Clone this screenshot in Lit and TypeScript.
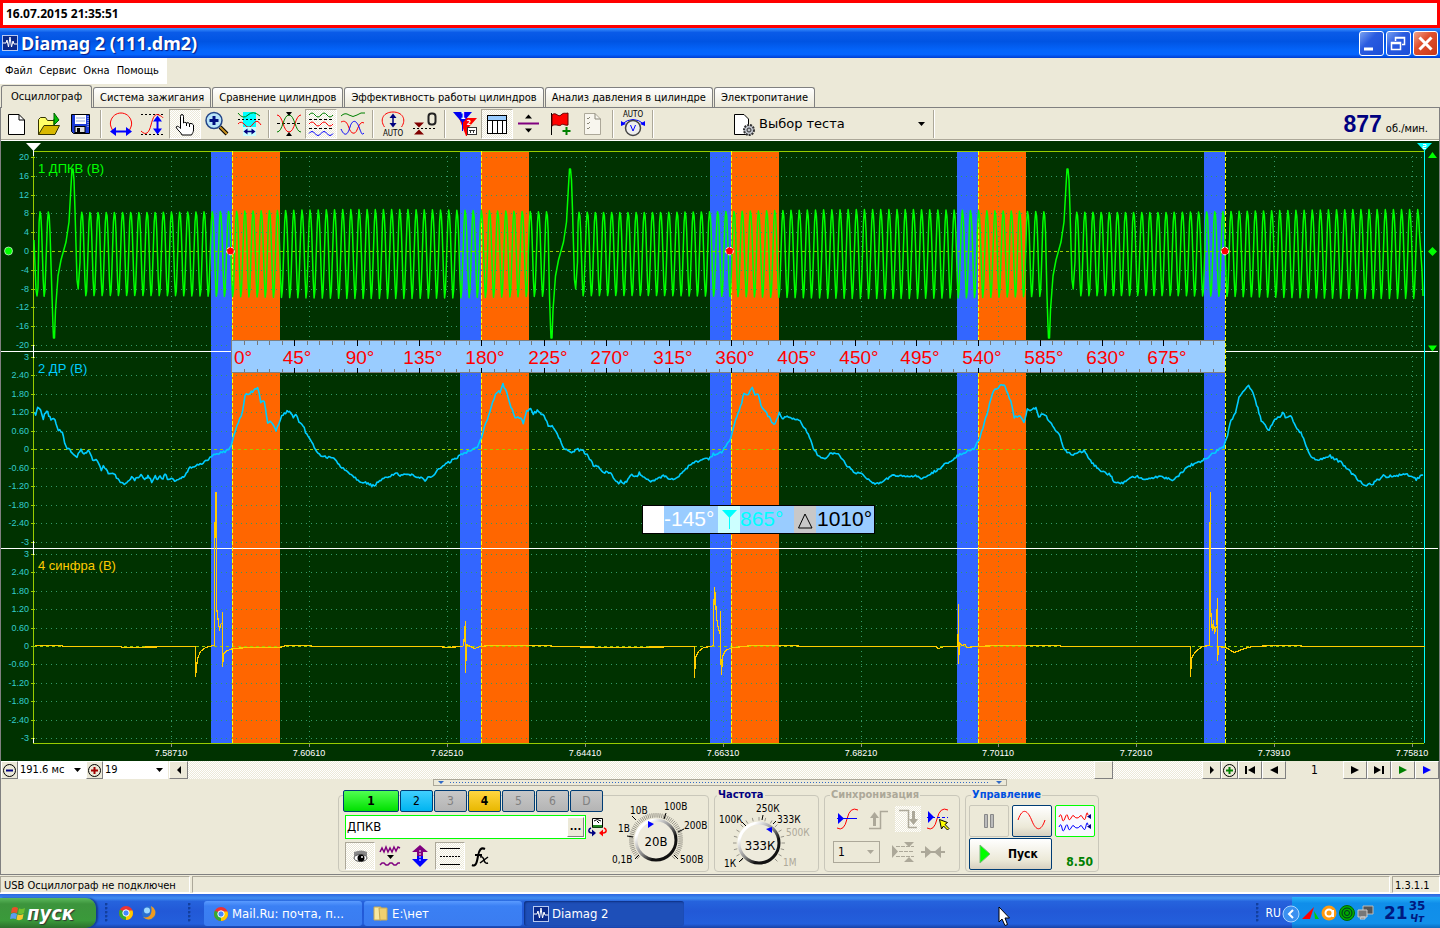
import { LitElement, html, svg, css } from "lit";
import { customElement, state } from "lit/decorators.js";

type Pt = [number, number];

/* ---------- signal data ---------- */

const CURSORS = [232, 481, 731, 978, 1225];
const GRID_X = [171, 309, 447, 585, 723, 861, 998, 1136, 1274, 1412];
const X_LABELS = ["7.58710", "7.60610", "7.62510", "7.64410", "7.66310", "7.68210", "7.70110", "7.72010", "7.73910", "7.75810"];

const SCALES = [
  { zero: 251, step: 18.8, labels: ["20", "16", "12", "8", "4", "0", "-4", "-8", "-12", "-16", "-20"] },
  { zero: 449, step: 18.5, labels: ["3", "2.40", "1.80", "1.20", "0.60", "0", "-0.60", "-1.20", "-1.80", "-2.40", "-3"] },
  { zero: 646, step: 18.4, labels: ["3", "2.40", "1.80", "1.20", "0.60", "0", "-0.60", "-1.20", "-1.80", "-2.40", "-3"] },
];

const scaled = (flat: number[], ox: number, sx: number): Pt[] => {
  const out: Pt[] = [];
  for (let i = 0; i < flat.length; i += 2) out.push([ox + flat[i] / sx, 340 + flat[i + 1] / 3]);
  return out;
};

const PRESSURE: Pt[] = [
  ...scaled([104, 217, 107, 227, 113, 198, 122, 210, 130, 235, 137, 215, 143, 217, 153, 241, 165, 238, 175, 270, 187, 277, 197, 320, 210, 332, 220, 340, 231, 350, 243, 330, 252, 343, 267, 330, 278, 361, 292, 360, 304, 390, 310, 378, 325, 400, 342, 402, 357, 423, 377, 432, 395, 412, 404, 421, 423, 404, 434, 420, 444, 408, 455, 425, 466, 409, 473, 420, 480, 408, 489, 418, 495, 403, 506, 420, 516, 412, 528, 424, 555, 405, 570, 380, 583, 382, 592, 370, 605, 375, 630, 353, 650, 340, 675, 335, 690, 325, 697, 305, 705, 275, 715, 245, 728, 215, 735, 165, 750, 160, 773, 141, 782, 185, 793, 187, 803, 247, 817, 248, 828, 275, 837, 250, 845, 228, 865, 212, 880, 232, 888, 222, 897, 250], 0, 3),
  [303, 426], [308, 437], [313, 444], [318, 454], [325, 457], [335, 459], [342, 468], [350, 473], [358, 480], [373, 486], [385, 478], [396, 473],
  ...scaled([0, 408, 35, 402, 75, 420, 100, 405, 125, 380, 180, 347, 215, 327, 232, 320, 245, 290, 270, 210, 290, 155, 300, 155, 309, 133, 320, 160, 333, 200, 345, 232, 362, 235, 370, 250, 380, 215, 392, 203, 400, 220, 412, 212, 432, 230, 445, 255, 460, 262, 480, 300, 492, 325, 515, 342, 530, 328, 550, 333, 565, 350, 580, 375, 595, 378, 610, 398, 630, 395, 640, 415, 656, 430, 662, 420, 672, 432, 695, 405, 712, 408, 718, 398, 732, 415, 760, 425, 790, 408, 820, 418, 845, 403, 870, 372, 910, 357, 930, 355, 940, 343, 965, 338, 985, 308, 995, 285, 1010, 230, 1025, 190, 1032, 160, 1045, 168, 1050, 150, 1057, 145, 1065, 165, 1075, 165, 1083, 195, 1100, 220, 1115, 245, 1125, 255, 1138, 218, 1147, 235, 1165, 228, 1200, 245, 1225, 280, 1240, 325, 1255, 348, 1275, 360, 1290, 342, 1315, 342, 1340, 375, 1365, 398, 1390, 405, 1425, 435, 1460, 418, 1480, 405, 1495, 410], 400, 3),
  ...scaled([0, 410, 45, 408, 65, 415, 85, 405, 125, 378, 170, 345, 215, 325, 230, 300, 245, 250, 272, 150, 285, 148, 295, 133, 305, 137, 322, 185, 332, 235, 345, 225, 360, 245, 370, 210, 385, 210, 395, 200, 403, 228, 418, 222, 440, 250, 465, 290, 478, 330, 500, 345, 535, 333, 550, 360, 580, 390, 612, 405, 622, 425, 648, 430, 665, 415, 690, 410, 720, 418, 755, 408, 795, 420, 840, 377, 880, 362, 910, 340, 940, 320, 952, 285, 962, 240, 975, 220, 985, 170, 1000, 155, 1013, 137, 1025, 160, 1040, 205, 1050, 245, 1073, 270, 1090, 235, 1105, 230, 1112, 215, 1120, 232, 1135, 225, 1150, 258, 1165, 280, 1180, 315, 1195, 352, 1215, 360, 1250, 348, 1285, 370, 1320, 408, 1350, 438, 1375, 430, 1405, 408, 1440, 410, 1470, 400, 1500, 417, 1520, 405], 900, 2.906),
];

const SPARK: Pt[] = [
  [34, 645], [60, 645], [64, 646], [120, 646], [122, 647], [180, 646], [195, 646], [195, 676], [196, 667], [197, 658], [200, 651], [205, 647], [213, 645], [214, 645], [214, 570],
  [215, 492], [216, 492], [216, 606], [217, 615], [218, 622], [219, 630], [220, 624], [222, 622], [222, 612], [222, 666], [223, 654], [225, 651], [232, 648], [250, 647], [280, 647], [285, 645], [310, 645],
  [312, 646], [440, 646], [445, 647], [463, 646], [464, 634], [465, 621], [465, 672], [466, 644], [470, 646], [474, 648], [480, 646], [490, 645], [550, 645], [552, 646], [620, 647], [693, 646],
  [694, 646], [694, 677], [695, 657], [698, 651], [703, 647], [710, 646], [713, 645], [713, 618], [714, 587], [715, 597], [716, 617], [718, 629], [720, 634], [720, 611], [720, 648], [721, 674],
  [722, 656], [725, 650], [732, 647], [745, 646], [750, 645], [795, 645], [800, 646], [935, 646], [938, 648], [944, 646], [957, 646], [958, 626], [958, 604], [958, 663], [959, 642], [961, 645], [965, 644], [966, 647],
  [975, 646], [1000, 645], [1058, 645], [1062, 646], [1190, 646], [1190, 676], [1191, 658], [1195, 651], [1202, 646], [1209, 645], [1209, 570], [1210, 492], [1210, 605], [1211, 623], [1212, 630],
  [1213, 620], [1214, 633], [1216, 625], [1217, 598], [1217, 660], [1218, 646], [1225, 647], [1234, 652], [1244, 648], [1252, 646], [1275, 645], [1300, 645], [1302, 646], [1424, 646],
];

const toPath = (pts: Pt[]) => pts.map(([x, y]) => `${x.toFixed(1)},${y.toFixed(1)}`).join(" ");

/* deterministic jitter gives the trace its sampled look */
function roughen(pts: Pt[], amp: number): Pt[] {
  const out: Pt[] = [];
  let seed = 7;
  for (let i = 0; i < pts.length - 1; i++) {
    const [x0, y0] = pts[i];
    const [x1, y1] = pts[i + 1];
    const n = Math.max(1, Math.round((x1 - x0) / 1.3));
    for (let k = 0; k < n; k++) {
      seed = (seed * 1103515245 + 12345) % 2147483648;
      const r = (seed / 2147483648 - 0.5) * 2 * amp;
      out.push([x0 + ((x1 - x0) * k) / n, y0 + ((y1 - y0) * k) / n + r]);
    }
  }
  out.push(pts[pts.length - 1]);
  return out;
}

function crank(): Pt[] {
  const out: Pt[] = [[34, 240], [36, 290], [37, 296], [38, 288]];
  const tooth = (p: number, last = false) => {
    const wob = Math.sin(p / 80) * 1.5;
    out.push([p - 1.2, 222], [p - 0.3, 211 + wob], [p + 0.6, 216], [p + 1.4, 232]);
    if (!last) out.push([p + 2.9, 280], [p + 3.8, 297 - wob], [p + 4.6, 291], [p + 5.4, 270]);
  };
  const gap = (d: number) =>
    out.push([d - 2, 296], [d - 1, 326], [d - 0.5, 338], [d + 0.5, 338], [d + 1.5, 310], [d + 4, 276], [d + 7, 260], [d + 12, 242], [d + 15, 222], [d + 17, 186], [d + 18, 169], [d + 19, 169], [d + 20, 180], [d + 21, 210], [d + 23, 280], [d + 24.2, 289], [d + 26, 262]);
  tooth(40.3);
  tooth(48.6, true);
  gap(54);
  for (let k = 0; k < 58; k++) tooth(82 + k * 8.155, k === 57);
  gap(551.5);
  for (let k = 0; k < 58; k++) tooth(579.3 + k * 8.155, k === 57);
  gap(1049);
  for (let k = 0; k < 43; k++) tooth(1077 + k * 8.12, k === 42);
  out.push([1422, 270], [1423, 296]);
  return out;
}

const angleX = (deg: number) => {
  const i = Math.min(3, Math.floor(deg / 180));
  return Math.round(CURSORS[i] + ((CURSORS[i + 1] - CURSORS[i]) * (deg - i * 180)) / 180);
};

@customElement("scope-plot")
export class ScopePlot extends LitElement {
  static styles = css`
    :host { display: block; background: #003200; }
    svg { display: block; width: 100%; height: auto; font-family: "Liberation Sans", Arial, sans-serif; }
    .crisp { shape-rendering: crispEdges; }
    .scale { font-size: 9px; fill: #33cccc; text-anchor: end; }
    .time { font-size: 9px; fill: #fff; text-anchor: middle; }
    .name { font-size: 13px; }
    .deg { font-size: 19px; fill: #f00; text-anchor: middle; }
    .read { font-size: 21px; }
    .dots { stroke: #339966; stroke-dasharray: 1 4; }
    .axis { stroke: #99cc00; fill: none; }
    .trace { fill: none; stroke-linejoin: round; }
  `;

  render() {
    const ticks: number[] = [];
    for (let d = 9; d < 720; d += 9) ticks.push(d);
    const majors = ticks.filter((d) => d % 45 === 0);
    return html`<svg viewBox="1 141 1438 620" role="img" aria-label="Осциллограмма">
      <rect x="0" y="141" width="1440" height="620" fill="#003200" />
      <g class="crisp">
        ${CURSORS.map((x, i) => svg`
          <rect x=${x - 21} y="152" width="21" height="591" fill="#3366ff" />
          ${i < 4 ? svg`<rect x=${x} y="152" width="48" height="591" fill="#ff6600" />` : null}`)}
        ${SCALES.map((s) => s.labels.map((_, i) => {
          const y = Math.round(s.zero + (i - 5) * s.step) + 0.5;
          return i === 5
            ? svg`<line x1="34" x2="1424" y1=${y} y2=${y} class="axis" stroke-dasharray="3 3" />`
            : svg`<line x1="36" x2="1422" y1=${y} y2=${y} class="dots" />`;
        }))}
        ${GRID_X.map((x) => svg`
          <line x1=${x + 0.5} x2=${x + 0.5} y1="156" y2="743" class="dots" />
          <line x1=${x + 0.5} x2=${x + 0.5} y1="743" y2="747" stroke="#8a8a8a" />`)}
        <path class="axis" d="M33.5 151.5H1424 M33.5 151V743.5H1424" />
        ${SCALES.map((s) => s.labels.map((_, i) => {
          const y = Math.round(s.zero + (i - 5) * s.step) + 0.5;
          return svg`<line x1="31" x2="35" y1=${y} y2=${y} class="axis" />`;
        }))}
        <path d="M1 351.5H1438 M1 548.5H1438 M33.5 149V156 M33.5 345V358 M33.5 541V555 M33.5 738V743" stroke="#fff" />
        ${CURSORS.map((x) => svg`
          <line x1=${x + 0.5} x2=${x + 0.5} y1="151" y2="743" stroke="#ffff00" stroke-dasharray="4 2" />`)}
        <line x1="1424.5" x2="1424.5" y1="150" y2="743" stroke="#00ffff" />
      </g>

      ${SCALES.map((s) => s.labels.map((t, i) => svg`
        <text class="scale" x="29" y=${Math.round(s.zero + (i - 5) * s.step) + 3}>${t}</text>`))}
      ${X_LABELS.map((t, i) => svg`<text class="time" x=${GRID_X[i]} y="756">${t}</text>`)}

      <text class="name" x="38" y="173" fill="#00ff00">1 ДПКВ (В)</text>
      <text class="name" x="38" y="373" fill="#00ccff">2 ДР (В)</text>
      <text class="name" x="38" y="570" fill="#ffcc00">4 синфра (В)</text>

      <polyline class="trace" points=${toPath(crank())} stroke="#00ff00" stroke-width="1.5" />
      <polyline class="trace" points=${toPath(roughen(PRESSURE, 1.3))} stroke="#00ccff" stroke-width="1.6" />
      <polyline class="trace crisp" points=${toPath(SPARK.map(([x, y]) => [x + 0.5, y + 0.5]))} stroke="#ffcc00" stroke-width="1.2" />

      <g class="crisp">
        <rect x="231" y="340" width="994" height="33" fill="#99ccff" />
        <path d="M231 340.500H1225 M231.500 340V373 M231 372.500H1225" stroke="#808080" />
        ${ticks.map((d) => {
          const x = angleX(d) + 0.5;
          return d % 45
            ? svg`<path d="M${x} 341V345 M${x} 369V372" stroke="#777" />`
            : svg`<path d="M${x} 340V346 M${x} 368V373" stroke="#000" />`;
        })}
      </g>
      <text class="deg" x="243" y="364">0°</text>
      ${majors.map((d) => svg`<text class="deg" x=${angleX(d) + (d < 100 ? 3 : 4)} y="364">${d}°</text>`)}

      <g class="crisp">
        <rect x="642.5" y="505.5" width="232" height="28" fill="#99ccff" stroke="#000" />
        <rect x="643" y="506" width="21" height="27" fill="#fff" />
        <rect x="718" y="506" width="22" height="27" fill="#ccffff" />
        <rect x="794" y="506" width="22" height="27" fill="#c8c8c8" />
      </g>
      <path d="M722 510H737L729.500 518Z" fill="#00ffff" />
      <path d="M729.500 516V529" stroke="#00ffff" />
      <path d="M798.500 528H812L805 514Z" fill="none" stroke="#000" />
      <text class="read" x="664" y="526" fill="#fff">-145°</text>
      <text class="read" x="740" y="526" fill="#00ffff">865°</text>
      <text class="read" x="817" y="526" fill="#000">1010°</text>

      <path d="M26 143H41L33.500 151Z" fill="#fff" />
      <path d="M1417 143H1432L1424.500 151Z" fill="#00ffff" />
      <path d="M1423 144.500h3v2h-3v2h3" fill="none" stroke="#fff" />
      <path d="M1428 158h9l-4.500-6z M1428 345.500h9l-4.500 6z M1428 251.500l4.500-4.500 4.500 4.500-4.500 4.500z" fill="#00ff00" />
      <circle cx="8.500" cy="251" r="4" fill="#00ff00" stroke="#fff" stroke-width=".6" />
      ${[230.5, 729.5, 1225].map((x) => svg`<circle cx=${x} cy="251" r="3.800" fill="#f00" stroke="#fff" stroke-dasharray="3 1.500" />`)}
    </svg>`;
  }
}

/* ---------- icons ---------- */

const ic = (body: unknown, w = 28, h = 28) =>
  html`<svg class="ic" width=${w} height=${h} viewBox="0 0 ${w} ${h}" fill="none" aria-hidden="true">${body}</svg>`;

const I = {
  app: ic(svg`<rect x=".5" y=".5" width="15" height="15" fill="#0a2a8c" stroke="#b9c9f0"/><path d="M1 8h3l1-3 1.500 7 1.500-10 1.500 10 1.500-6 1 3h3" stroke="#fff"/>`, 16, 16),
  fresh: ic(svg`<path d="M5.500 4.500H16L21.500 10V24.500H5.500Z" fill="#fff" stroke="#000"/><path d="M16 4.500V10H21.500" stroke="#000"/>`),
  open: ic(svg`<path d="M3.500 24.500V9.500l2-2h5l2 3h7v5" fill="#ffff66" stroke="#333300"/><path d="M3.500 24.500L9 15.500H24.500L20 24.500Z" fill="#d8b800" stroke="#333300"/><path d="M19 3v12l5-5z" fill="#00c000" stroke="#006000"/><path d="M19 9v6" stroke="#006000"/>`),
  save: ic(svg`<path d="M4.500 4.500H22.500V23.500H6.500L4.500 21.500Z" fill="#1a3ad8" stroke="#000"/><rect x="8" y="5" width="11" height="9" fill="#fff"/><path d="M9 8h9M9 11h9" stroke="#9ad"/><rect x="8" y="16.500" width="10" height="6" fill="#ddd" stroke="#000"/><rect x="10" y="18" width="3" height="4" fill="#000"/><path d="M21 6v12" stroke="#dde" stroke-dasharray="1 1"/>`),
  fitX: ic(svg`<path d="M5.500 20C4 17 3 15 3.500 12C6 0 22 0 24.500 12C25 15 24 17 22.500 20" stroke="#f00"/><path d="M7 21.500h14" stroke="#00f" stroke-width="2"/><path d="M3 21.500l6-4.500v9zM25 21.500l-6-4.500v9z" fill="#00f"/>`),
  fitY: ic(svg`<path d="M2 4.500h23M2 24.500h23" stroke="#000" stroke-dasharray="2 2"/><path d="M2 21c5 5 8 2 10-6s4-12 8-10 4 3 4 3" stroke="#f00"/><path d="M18.500 8v13" stroke="#00f" stroke-width="2"/><path d="M14 11.500l4.500-6 4.500 6zM14 18.500l4.500 6 4.500-6z" fill="#00f"/>`),
  hand: ic(svg`<path d="M9.500 18V6.500q0-2 1.500-2t1.500 2V13q1-1.500 3 0 1.500-1 3 .5 3-.5 4 1.500v5c0 2-1 3-2 5H11c-1-3-5-5-6-8 1-1.500 3-.5 4.500 1.500z" fill="#fff" stroke="#000"/><path d="M15.500 13v3M18.500 14v3" stroke="#000"/>`),
  zoom: ic(svg`<path d="M17 17l7 7" stroke="#000" stroke-width="4"/><path d="M17 17l7 7" stroke="#c89020" stroke-width="2"/><circle cx="11" cy="10.500" r="8" fill="#b8e4f8" stroke="#224488" stroke-width="1.500"/><path d="M11 6v9M6.500 10.500h9" stroke="#001080" stroke-width="3"/>`),
  range: ic(svg`<rect x="8" y="2" width="13" height="24" fill="#00ffff"/><path d="M3 3q5 7 10 2t12 1" stroke="#008000"/><path d="M3 9.500h23" stroke="#000" stroke-dasharray="2 2"/><path d="M3 14q3-4 7 1t8-1 8 1" stroke="#f00"/><rect x="8" y="17" width="13" height="9" fill="#c8ffff"/><path d="M10 21.500h9" stroke="#000080" stroke-width="1.500"/><path d="M8.500 21.500l4-3v6zM20.500 21.500l-4-3v6z" fill="#000080"/>`),
  cross: ic(svg`<path d="M2 13.500h24" stroke="#000" stroke-dasharray="3 2"/><path d="M2 5c6 0 6 17 12 17s6-17 12-17" stroke="#f00"/><path d="M2 22c6 0 6-17 12-17s6 17 12 17" stroke="#008000"/><path d="M11 2h6l-3 4zM11 26h6l-3-4z" fill="#000"/>`),
  stack: ic(svg`<path d="M2 5q3-4 6 0t6 0 6 0 6 0" stroke="#008000"/><path d="M2 9.500h24M2 18.500h24" stroke="#000" stroke-dasharray="3 2"/><path d="M2 14q3-4 6 0t6 0 6 0 6 0" stroke="#f00"/><path d="M2 23.500q3-4 6 0t6 0 6 0 6 0" stroke="#00f"/>`),
  overlay: ic(svg`<path d="M2 6q4-4 8-1t8 0 8-2" stroke="#008000"/><path d="M2 12c4-2 6 0 8 6s6 7 8 2 4-9 7-7" stroke="#f00"/><path d="M2 19c4 9 7 5 9-2s6-8 9 0 3 8 5 6" stroke="#00f"/>`),
  auto: ic(svg`<path d="M5.500 17C0 9 5 2 14 2S28 9 22.500 17" stroke="#f00"/><path d="M14 6v9" stroke="#000080" stroke-width="1.500"/><path d="M10.500 8L14 3.500 17.500 8zM10.500 13l3.500 4.500 3.500-4.500z" fill="#000080"/><text x="14" y="26" font-size="8" fill="#000" text-anchor="middle">AUTO</text>`),
  zero: ic(svg`<path d="M2 18.500h23" stroke="#000" stroke-dasharray="2 2"/><path d="M3 12.500h10l-5 5zM3 24.500h10l-5-5z" fill="#800000"/><rect x="17.500" y="3.500" width="7" height="11" rx="3" stroke="#222" stroke-width="2"/>`),
  flags: ic(svg`<path d="M8 8h18l-8 9h-3v9" fill="#f00"/><path d="M15.500 12v14" stroke="#f00"/><path d="M2 2h19l-9.500 11z" fill="#0000f0"/><path d="M11.500 2v19" stroke="#0000f0"/><text x="12" y="9" font-size="8" font-weight="700" fill="#fff" text-anchor="middle">1</text><text x="18" y="15" font-size="7" font-weight="700" fill="#fff" text-anchor="middle">2</text><rect x="16.500" y="17.500" width="9" height="7" fill="#fff" stroke="#333"/><path d="M18 20.500h6M19.500 20v3M22.500 20v3" stroke="#333"/>`),
  table: ic(svg`<rect x="4.500" y="5.500" width="19" height="18" fill="#fff" stroke="#000"/><rect x="5" y="6" width="18" height="4" fill="#99ccff"/><path d="M4 10.500h20M9.500 10v13M14.500 10v13M19.500 10v13" stroke="#000"/>`),
  split: ic(svg`<path d="M3 13.500h21" stroke="#800080" stroke-width="2"/><path d="M10 8.500h7l-3.500-4zM10 18.500h7l-3.500 4z" fill="#000"/>`),
  flag: ic(svg`<path d="M4.500 3v22" stroke="#000"/><path d="M5 5c4-4 6 3 9 0s4-1 7-2v12c-3 1-5-2-7 0s-5-2-9 1z" fill="#f00" stroke="#600000"/><path d="M19.500 17v8M15.500 21h8" stroke="#008000" stroke-width="2"/>`),
  list: ic(svg`<path d="M5.500 3.500H16L21.500 9V24.500H5.500Z" fill="#f8f6ee" stroke="#aca899"/><path d="M16 3.500V9H21.500M8 8l1 1 2-2M8 13l1 1 2-2M8 18l1 1 2-2" stroke="#8a8778"/>`),
  autoV: ic(svg`<text x="14" y="7" font-size="8" fill="#000" text-anchor="middle">AUTO</text><path d="M3 14q11-9 22 0" stroke="#00f"/><path d="M2 16v-5l5 3zM26 16v-5l-5 3z" fill="#00f"/><circle cx="14" cy="18" r="7.500" fill="#eee" stroke="#444" stroke-width="1.500"/><path d="M11.500 15l2.500 6 2.500-6" stroke="#00f"/>`),
  test: ic(svg`<path d="M3.500 4.500H13L17.500 9V24.500H3.500Z" fill="#fff" stroke="#000"/><circle cx="18" cy="20" r="5" fill="#c0c4cc" stroke="#333" stroke-width="2" stroke-dasharray="2 1"/><circle cx="18" cy="20" r="2" stroke="#333"/>`),
};

const tri = (d: string, fill = "#000", w = 14) => ic(svg`<path d=${d} fill=${fill}/>`, w, 10);

const chrome = ic(svg`<circle cx="8" cy="8" r="7" fill="#e33"/><path d="M2 4.500A7 7 0 0 0 8 15l3-5.500z" fill="#3a3"/><path d="M8 15A7 7 0 0 0 14.500 5.500H8z" fill="#fc0"/><circle cx="8" cy="8" r="3.200" fill="#48f" stroke="#fff"/>`, 16, 16);

const knobTicks = (cx: number, cy: number, r0: number, r1: number, n: number) => {
  let d = "";
  for (let i = 0; i <= n; i++) {
    const a = ((135 + (270 * i) / n) * Math.PI) / 180;
    d += `M${(cx + r0 * Math.cos(a)).toFixed(1)} ${(cy + r0 * Math.sin(a)).toFixed(1)}L${(cx + r1 * Math.cos(a)).toFixed(1)} ${(cy + r1 * Math.sin(a)).toFixed(1)}`;
  }
  return d;
};

const knobFace = (id: string, cx: number, cy: number) => svg`
  <linearGradient id=${id} x1="0" y1="0" x2="1" y2="1"><stop offset=".2" stop-color="#fff"/><stop offset=".5" stop-color="#888"/><stop offset=".7" stop-color="#111"/></linearGradient>
  <circle cx=${cx} cy=${cy} r="20" fill="#eeebdd" stroke="url(#${id})" stroke-width="3"/>`;

@customElement("app-root")
export class AppRoot extends LitElement {
  @state() tab = 0;

  static styles = css`
    :host { display: block; font-family: "DejaVu Sans Condensed", "DejaVu Sans", sans-serif; font-size: 11px; line-height: 14px; color: #000; }
    * { box-sizing: border-box; }
    button, select, input { font: inherit; color: inherit; margin: 0; padding: 0; border: 0; background: none; border-radius: 0; }
    svg { display: block; flex: none; }
    .page { min-height: 100vh; display: flex; flex-direction: column; background: #ece9d8; }
    .stamp { height: 28px; border: 3px solid #f00; background: #fff; padding: 4px 3px; font: 700 12px/14px "Noto Sans", sans-serif; }
    .title { height: 30px; display: flex; align-items: center; gap: 2px; padding: 0 2px; background: linear-gradient(#3f95ff, #0a5be8 15%, #0054e3 45%, #0465fb 75%, #0565ff 88%, #003dd0); }
    .title h1 { flex: 1; margin: 0; padding-left: 1px; font: 700 18px/24px "Noto Sans", sans-serif; color: #fff; text-shadow: 1px 1px 1px #0a1883; }
    .win { width: 25px; height: 25px; border: 1px solid #fff; border-radius: 3px; background: linear-gradient(135deg, #7ba2f0, #2a5be0 40%, #1b4fd8); display: grid; place-items: center; }
    .win.close { background: linear-gradient(135deg, #f0a48c, #e0502e 40%, #c8381a); }
    .menurow { height: 26px; display: flex; }
    .menu { display: flex; gap: 7px; padding: 6px 8px 6px 5px; background: #fff; }
    .menu a { color: #000; text-decoration: none; }
    .tabs { height: 24px; display: flex; align-items: flex-end; gap: 1px; border-bottom: 1px solid #808080; padding: 0 0 0 1px; }
    .tab { height: 20px; padding: 0 6px; border: 1px solid #808080; border-bottom: 0; border-radius: 3px 3px 0 0; background: linear-gradient(#fff, #ece9d8); white-space: nowrap; }
    .tab.on { height: 23px; padding: 0 9px; background: #ece9d8; margin-bottom: -1px; }
    .body { border: solid #808080; border-width: 0 1px; border-bottom: 1px solid #808080; flex: 1; display: flex; flex-direction: column; }
    .tools { height: 33px; display: flex; align-items: center; border-bottom: 1px solid #fff; box-shadow: inset 0 -1px #aca899; }
    .tool { width: 32px; height: 30px; display: grid; place-items: center; }
    .tool.on { border: 1px solid #aca899; border-color: #aca899 #fff #fff #aca899; background: repeating-conic-gradient(#fff 0 25%, #ece9d8 0 50%) 0 0 / 2px 2px; }
    .sep { width: 2px; height: 28px; margin: 0 3px; background: linear-gradient(90deg, #aca899 50%, #fff 50%); }
    .test { display: flex; align-items: center; margin-left: 74px; width: 199px; }
    .test select { flex: 1; font-size: 13px; height: 22px; appearance: none; font-family: "DejaVu Sans", sans-serif; }
    .arrow { background: url("data:image/svg+xml,%3Csvg xmlns='http://www.w3.org/2000/svg' width='8' height='4'%3E%3Cpath d='M0 0h7L3.500 4z'/%3E%3C/svg%3E") no-repeat right 4px center; }
    .arrow.dim { background-image: url("data:image/svg+xml,%3Csvg xmlns='http://www.w3.org/2000/svg' width='8' height='4'%3E%3Cpath fill='%23aca899' d='M0 0h7L3.500 4z'/%3E%3C/svg%3E"); }
    .rpm { margin-left: auto; padding-right: 11px; display: flex; align-items: baseline; gap: 4px; }
    .rpm b { font: 700 23px/28px "Liberation Sans", sans-serif; color: #000080; }
    .nav { height: 18px; display: flex; }
    .nav button { width: 24px; background: #ece9d8; border: 1px solid; border-color: #fff #808080 #808080 #fff; display: grid; place-items: center; }
    .nav .sm { width: 17px; }
    .nav .md { width: 19px; }
    .nav select { appearance: none; background-color: #fff; padding-left: 2px; width: 68px; }
    .nav .cnt { width: 65px; margin-right: 1px; }
    .nav .gap { width: 57px; text-align: center; line-height: 19px; font-size: 12px; }
    .bar { flex: 1; min-width: 0; appearance: none; height: 18px; background: repeating-conic-gradient(#fff 0 25%, #ece9d8 0 50%) 0 0 / 2px 2px; }
    .bar::-webkit-slider-thumb { appearance: none; width: 19px; height: 18px; background: #ece9d8; border: 1px solid; border-color: #fff #808080 #808080 #fff; }
    .splitter { width: 574px; height: 7px; margin: 0 auto; border: 1px solid #aca899; display: flex; align-items: center; gap: 6px; padding: 0 4px; }
    .splitter i { flex: 1; height: 1px; background: repeating-linear-gradient(90deg, #316ac5 0 1px, transparent 1px 3px); }
    .panel { flex: 1; display: flex; justify-content: center; gap: 5px; padding: 3px 3px 2px 0; }
    fieldset { margin: 0; padding: 0 4px; border: 1px solid #c9c7ba; border-radius: 4px; min-width: 0; }
    legend { padding: 0 1px; font: 700 11px/12px "DejaVu Sans Condensed", sans-serif; color: #000080; }
    .g1 { width: 371px; margin-top: 6px; display: flex; justify-content: space-between; padding: 0 0 0 4px; }
    .g2 { width: 105px; padding: 0 2px; }
    .g3 { width: 136px; }
    .g3 legend { color: #aca899; margin-left: 1px; }
    .g4 { width: 134px; padding: 0 3px; }
    .g4 legend { color: #0050e0; margin-left: 2px; }
    .left { width: 265px; margin-top: -6px; display: flex; flex-direction: column; gap: 3px; }
    .chans { display: flex; gap: 1px; }
    .ch { width: 33px; height: 22px; border: 1px solid #003c74; border-radius: 2px; background: linear-gradient(#c8c8c8, #b4b4b4); color: #808080; font-size: 12px; }
    .ch.c1 { width: 56px; background: linear-gradient(#50ff50, #00e000); color: #000; font-weight: 700; }
    .ch.c2 { background: linear-gradient(#40d0ff, #00b4f0); color: #000; }
    .ch.c4 { background: linear-gradient(#ffd640, #e8b800); color: #000; font-weight: 700; }
    .namerow { display: flex; align-items: center; gap: 2px; padding-left: 2px; }
    .name { width: 241px; height: 24px; border: 1px solid #0f0; background: #fff; display: flex; padding: 1px; }
    .name input { flex: 1; min-width: 0; font-size: 13px; padding-left: 0; outline: 0; }
    .name button { width: 17px; background: #ece9d8; border: 1px solid; border-color: #fff #808080 #808080 #fff; font-weight: 700; line-height: 8px; }
    .row { display: flex; padding-left: 2px; }
    .row button { width: 30px; height: 28px; display: grid; place-items: center; }
    .row .on, .hatch { border: 1px solid; border-color: #aca899 #fff #fff #aca899; background: repeating-conic-gradient(#fff 0 25%, #ece9d8 0 50%) 0 0 / 2px 2px; }
    .knob { font: 10px "DejaVu Sans Condensed", sans-serif; }
    .sync { display: flex; flex-wrap: wrap; padding: 4px 0 0 4px; gap: 5px 0; align-items: center; }
    .sync button { width: 30px; height: 28px; display: grid; place-items: center; }
    .sync .hatch { border: 0; width: 26px; height: 26px; margin: 0 2px; }
    .sync select { width: 47px; height: 22px; border: 1px solid #aca899; appearance: none; padding-left: 4px; font-size: 12px; margin-right: 8px; opacity: 1; color: #000; }
    .ctl { display: grid; grid-template-columns: 40px 40px 40px; gap: 1px 3px; padding-top: 4px; }
    .ctl button { height: 32px; border: 1px solid #003c74; border-radius: 2px; background: linear-gradient(#fff, #ece9d8 70%, #d6d0c0); display: flex; align-items: center; justify-content: center; }
    .ctl .off { border-color: #c9c7ba; background: #ece9d8; }
    .ctl .sel { border: 1px solid #0f0; background: #f8f8ff; }
    .ctl .go { grid-column: span 2; font-weight: 700; font-size: 12px; justify-content: flex-start; gap: 16px; padding-left: 8px; }
    .volt { color: #008000; font: 700 12px/16px "DejaVu Sans Condensed", sans-serif; align-self: end; text-align: right; padding-right: 2px; }
    .status { height: 19px; display: flex; gap: 2px; padding-top: 1px; border-bottom: 1px solid #fff; }
    .status span { border: 1px solid; border-color: #aca899 #fff #fff #aca899; padding: 1px 3px; line-height: 15px; }
    .status .s1 { width: 190px; }
    .status .s2 { flex: 1; }
    .status .s3 { width: 48px; padding: 1px 2px; }
    .task { height: 34px; display: flex; align-items: stretch; background: linear-gradient(#2a66e0, #3f8cf0 12%, #2663dd 22%, #2259d7 50%, #235fdc 88%, #1941a5); color: #fff; font: 13px/16px "DejaVu Sans Condensed", sans-serif; padding-top: 4px; }
    .start { width: 96px; background: linear-gradient(#5cb85c, #3c943c 20%, #3a9a3a 75%, #2c702c); border-radius: 0 10px 10px 0; box-shadow: 2px 0 2px #123a90; display: flex; align-items: center; gap: 1px; padding-left: 10px; font: italic 700 20px/22px "DejaVu Sans Condensed", sans-serif; color: #fff; text-shadow: 1px 1px 1px #333; }
    .quick { display: flex; align-items: center; gap: 7px; width: 83px; }
    .grip { width: 4px; height: 20px; background: radial-gradient(circle at 1px 1px, #123f9e 1px, transparent 2px) 0 0 / 4px 4px; margin: 0 2px 0 9px; align-self: center; }
    .items { display: flex; gap: 2px; flex: 1; min-width: 0; padding: 3px 0 2px 10px; }
    .items button { flex: 0 1 158px; display: flex; align-items: center; gap: 3px; padding: 0 9px; border-radius: 3px; background: linear-gradient(#5a9bff, #3b80f4 20%, #3a7cf0); white-space: nowrap; overflow: hidden; }
    .items .cur { background: #1e4fb8; box-shadow: inset 1px 1px 2px #0d2f80; flex-basis: 160px; }
    .lang { align-self: center; margin: 0 11px 0 4px; font-size: 12px; }
    .tray { width: 148px; display: flex; align-items: center; gap: 2px; background: linear-gradient(#2ab4f8, #0f8eea 20%, #1290ea 85%, #0c6cc0); margin-top: -1px; position: relative; padding-left: 10px; }
    .chev { position: absolute; left: -10px; top: 8px; }
    .clock { display: flex; margin-left: 8px; font: 700 17px/20px "DejaVu Sans", sans-serif; color: #001a80; gap: 1px; align-items: center; }
    .clock small { display: flex; flex-direction: column; font-size: 12px; line-height: 13px; text-align: center; }
    .clock em { font-size: 10px; line-height: 12px; }
    .cursor { position: absolute; left: 998px; top: 906px; }
  `;

  private tool = (i: unknown, label: string, on = false) =>
    html`<button class=${on ? "tool on" : "tool"} aria-label=${label}>${i}</button>`;

  render() {
    const tabs = ["Осциллограф", "Система зажигания", "Сравнение цилиндров", "Эффективность работы цилиндров", "Анализ давления в цилиндре", "Электропитание"];
    const sep = html`<span class="sep"></span>`;
    return html`<div class="page">
      <div class="stamp">16.07.2015 21:35:51</div>
      <header class="title">
        ${I.app}
        <h1>Diamag 2 (111.dm2)</h1>
        <button class="win" aria-label="Свернуть">${ic(svg`<path d="M3 16h9" stroke="#fff" stroke-width="3"/>`, 21, 21)}</button>
        <button class="win" aria-label="Восстановить">${ic(svg`<path d="M7.500 8V4.500h9v7H14M7 5h10" stroke="#fff" stroke-width="1.500"/><path d="M3.500 9.500h9v7h-9zM3 10.500h10" stroke="#fff" stroke-width="1.500"/>`, 21, 21)}</button>
        <button class="win close" aria-label="Закрыть">${ic(svg`<path d="M4.500 4.500l12 12M16.500 4.500l-12 12" stroke="#fff" stroke-width="3"/>`, 21, 21)}</button>
      </header>
      <div class="menurow"><nav class="menu"><a href="#">Файл</a><a href="#">Сервис</a><a href="#">Окна</a><a href="#">Помощь</a></nav></div>
      <div class="tabs" role="tablist">
        ${tabs.map((t, i) => html`<button role="tab" aria-selected=${i === this.tab} class=${i === this.tab ? "tab on" : "tab"} @click=${() => (this.tab = i)}>${t}</button>`)}
      </div>
      <main class="body">
        <div class="tools">
          ${this.tool(I.fresh, "Новый")}${this.tool(I.open, "Открыть")}${this.tool(I.save, "Сохранить")}${sep}
          ${this.tool(I.fitX, "По ширине")}${this.tool(I.fitY, "По высоте")}${this.tool(I.hand, "Рука", true)}${this.tool(I.zoom, "Увеличить")}${this.tool(I.range, "Диапазон")}${sep}
          ${this.tool(I.cross, "Совместить")}${this.tool(I.stack, "Разнести", true)}${this.tool(I.overlay, "Наложить")}${sep}
          ${this.tool(I.auto, "Авто")}${this.tool(I.zero, "Ноль")}${sep}
          ${this.tool(I.flags, "Маркеры")}${this.tool(I.table, "Таблица", true)}${this.tool(I.split, "Разделить")}${this.tool(I.flag, "Флаг")}${this.tool(I.list, "Список")}${sep}
          ${this.tool(I.autoV, "Автомасштаб")}${sep}
          <label class="test">${I.test}<select class="arrow" aria-label="Выбор теста"><option>Выбор теста</option></select></label>${sep}
          <div class="rpm"><b>877</b><span>об./мин.</span></div>
        </div>
        <scope-plot></scope-plot>
        <div class="nav">
          <button class="sm" aria-label="Меньше">${ic(svg`<circle cx="7.500" cy="7.500" r="6" stroke="#000"/><path d="M4 7.500h7" stroke="#000080" stroke-width="2"/>`, 15, 15)}</button>
          <select class="arrow" aria-label="Развёртка"><option>191.6 мс</option></select>
          <button class="sm" aria-label="Больше">${ic(svg`<circle cx="7.500" cy="7.500" r="6" stroke="#000"/><path d="M4 7.500h7M7.500 4v7" stroke="#a00000" stroke-width="2"/>`, 15, 15)}</button>
          <select class="arrow cnt" aria-label="Кадр"><option>19</option></select>
          <button class="md" aria-label="Влево">${tri("M9 1v8L5 5z")}</button>
          <input class="bar" type="range" min="0" max="995" value="906" aria-label="Прокрутка" />
          <button class="md" aria-label="Вправо">${tri("M5 1v8l4-4z")}</button>
          <button class="sm" aria-label="Добавить">${ic(svg`<circle cx="7.500" cy="7.500" r="6" stroke="#000"/><path d="M4 7.500h7M7.500 4v7" stroke="#008000" stroke-width="2"/>`, 15, 15)}</button>
          <button aria-label="В начало">${tri("M2 1h2v8H2zM12 1v8L5 5z")}</button>
          <button aria-label="Назад">${tri("M11 1v8L3 5z")}</button>
          <span class="gap">1</span>
          <button aria-label="Вперёд">${tri("M3 1v8l8-4z")}</button>
          <button aria-label="В конец">${tri("M2 1v8l7-4zM10 1h2v8h-2z")}</button>
          <button aria-label="Воспроизвести">${tri("M3 1v8l8-4z", "#008000")}</button>
          <button aria-label="Быстро">${tri("M3 1v8l8-4z", "#0000ff")}</button>
        </div>
        <div class="splitter">${ic(svg`<path d="M0 0h6L3 3z" fill="#316ac5"/>`, 6, 3)}<i></i>${ic(svg`<path d="M0 0h6L3 3z" fill="#316ac5"/>`, 6, 3)}</div>
        <div class="panel">
          <fieldset class="g1" aria-label="Канал">
            <div class="left">
              <div class="chans">
                ${["1", "2", "3", "4", "5", "6", "D"].map((c) => html`<button class="ch c${c}">${c}</button>`)}
              </div>
              <div class="namerow">
                <label class="name"><input aria-label="Имя канала" value="ДПКВ" /><button aria-label="Выбрать">...</button></label>
                ${ic(svg`<path d="M4.500 1.500h10v9h-10z" fill="#fff" stroke="#000"/><path d="M6 4q3-3 7 0M9 4l2 2" stroke="#000"/><rect x="5" y="8" width="9" height="2.500" fill="#228822"/><path d="M3 11C0 12 0 16 4 16" stroke="#000080" stroke-width="1.500"/><path d="M4 12.500l4 3.500-4 3.500z" fill="#000080"/><path d="M16 11c3 1 3 5-1 5" stroke="#f00" stroke-width="1.500"/><path d="M15 12.500l-4 3.500 4 3.500z" fill="#f00"/>`, 19, 20)}
              </div>
              <div class="row">
                <button class="on" aria-label="Видимость">${ic(svg`<path d="M5 6q8-3 13 0v5q-6-4-13 0z" fill="#888"/><ellipse cx="11.500" cy="12" rx="6.500" ry="3.500" fill="#fff" stroke="#555"/><circle cx="12" cy="12" r="3.500" fill="#000"/><circle cx="13" cy="11" r="1" fill="#fff"/>`, 22, 20)}</button>
                <button aria-label="Фильтр">${ic(svg`<path d="M1 7l2-4 2 4 2-5 2 5 2-4 2 4 2-5 2 4 2-4 2 1M1 20l2-2 2 0 2 2 2 0 2-2 2 0 2 2 2 0 2-2 2 0" stroke="#800080" stroke-width="1.500"/><path d="M8 10h7l-3.500 4z" fill="#000"/>`, 22, 22)}</button>
                <button aria-label="Инвертировать">${ic(svg`<path d="M11 0l8 7h-5v4H8V7H3z" fill="#800080"/><path d="M11 22l8-8h-5v-3H8v3H3z" fill="#00f"/><path d="M11 5v12" stroke="#fff" stroke-dasharray="2 1"/>`, 22, 22)}</button>
                <button class="on" aria-label="Уровни">${ic(svg`<path d="M1 3.500h20M1 19.500h20" stroke="#000"/><path d="M1 11.500h20" stroke="#000" stroke-dasharray="2 1"/>`, 22, 22)}</button>
                <button aria-label="Функция">${ic(svg`<path d="M3 20c4 2 5-3 6-9s3-9 7-7M6 10h7" stroke="#000" stroke-width="2"/><path d="M11 12q3-1 4 3t4 3M19 12l-8 6" stroke="#000" stroke-width="1.500"/>`, 22, 22)}</button>
              </div>
            </div>
            <svg class="knob" width="99" height="74" viewBox="609 797 99 74" role="img" aria-label="Предел 20В">
              <path d=${knobTicks(656, 841, 22.5, 27, 60)} stroke="#98958a" />
              <path d="M636 821l-4-4M664 820l2-6M678 833l6-3M674 856l4 4M639 856l-4 4M633 838l-6-1" stroke="#000" />
              ${knobFace("kf1", 656, 841)}
              <path d="M648 822v7l6-4z" fill="#00f" />
              <text x="656" y="847" font-size="13" text-anchor="middle">20В</text>
              <text x="630" y="815">10В</text><text x="664" y="811">100В</text><text x="684" y="830">200В</text>
              <text x="680" y="864">500В</text><text x="612" y="864">0,1В</text><text x="618" y="833">1В</text>
            </svg>
          </fieldset>
          <fieldset class="g2"><legend>Частота</legend>
            <svg class="knob" width="99" height="69" viewBox="718 801 99 69" role="img" aria-label="Частота 333К">
              <path d=${knobTicks(760, 843, 22.5, 26, 18)} stroke="#98958a" />
              <path d="M747 826l-4-4M763 820l1-5M774 824l3-3M744 858l-4 4" stroke="#000" />
              ${knobFace("kf2", 760, 843)}
              <path d="M767 829l6-2v6z" fill="#00f" />
              <text x="761" y="850" font-size="13" text-anchor="middle">333К</text>
              <text x="757" y="812">250К</text><text x="720" y="823">100К</text><text x="778" y="823">333К</text>
              <text x="787" y="836" fill="#aca899">500К</text><text x="784" y="866" fill="#aca899">1М</text><text x="725" y="867">1К</text>
            </svg>
          </fieldset>
          <fieldset class="g3"><legend>Синхронизация</legend>
            <div class="sync">
              <button aria-label="Уровень">${ic(svg`<path d="M1 22q7 4 10-9t11-9" stroke="#f00"/><path d="M1 12.500h20" stroke="#00f"/><path d="M2 7v11l6-5.500z" fill="#00f"/>`, 24, 26)}</button>
              <button aria-label="Фронт">${ic(svg`<path d="M3 22.500h11.500V5.500H22" stroke="#aca899" stroke-width="1.500"/><path d="M8.500 20V10" stroke="#aca899" stroke-width="3"/><path d="M4 12l4.500-6 4.500 6z" fill="#aca899"/>`, 24, 26)}</button>
              <button class="hatch" aria-label="Спад">${ic(svg`<path d="M3 4.500h9.500V21.500H21" stroke="#aca899" stroke-width="1.500"/><path d="M17.500 5v10" stroke="#aca899" stroke-width="3"/><path d="M13 13l4.500 6 4.500-6z" fill="#aca899"/>`, 24, 26)}</button>
              <button aria-label="Указать">${ic(svg`<path d="M1 22q7 4 10-9t11-9" stroke="#f00"/><path d="M1 11.500h21" stroke="#00f" stroke-dasharray="3 2"/><path d="M2 5v12l6-6z" fill="#00f"/><path d="M13.500 13.500l8 3-2.500 2 4 4-1.500 1.500-4-4-2 3z" fill="#ff0" stroke="#000"/>`, 24, 26)}</button>
              <select class="arrow dim" aria-label="Канал синхронизации" disabled><option>1</option></select>
              <button aria-label="Порог">${ic(svg`<path d="M1 4v13l6-6.500zM13 1h10l-5 5zM13 21h10l-5-5z" fill="#aca899"/><path d="M5 5.500h18M5 15.500h18M8 10.500h15" stroke="#aca899" stroke-dasharray="4 1"/>`, 24, 22)}</button>
              <button aria-label="Сжать">${ic(svg`<path d="M0 11h24" stroke="#aca899" stroke-width="2"/><path d="M4 5v12l7-6zM20 5v12l-7-6z" fill="#aca899"/>`, 24, 22)}</button>
            </div>
          </fieldset>
          <fieldset class="g4"><legend>Управление</legend>
            <div class="ctl">
              <button class="off" aria-label="Пауза">${ic(svg`<path d="M5.500 3.500h3v13h-3zM11.500 3.500h3v13h-3z" fill="#bbb" stroke="#888"/>`, 20, 20)}</button>
              <button aria-label="Осциллограмма">${ic(svg`<path d="M1 10C6-4 11 1 15 11s9 11 13-1" stroke="#f00"/>`, 30, 22)}</button>
              <button class="sel" aria-label="Поток">${ic(svg`<path d="M1 7q2-5 3 1t3 0 3-1 3 1 3-2 3 2 3-2 3 2 3-2 2-1" stroke="#f00"/><path d="M1 17q2-5 3 1t3 0 3-1 3 1 3-2 3 2 3-2 3 2 3-2 2-1" stroke="#00f"/><path d="M33 4v5l-4-2.500zM33 14v5l-4-2.500z" fill="#000080"/>`, 34, 22)}</button>
              <button class="go">${ic(svg`<path d="M2 1v18l10-9z" fill="#0f0" stroke="#7b7" />`, 14, 20)}Пуск</button>
              <span class="volt">8.50</span>
            </div>
          </fieldset>
        </div>
      </main>
      <div class="status"><span class="s1">USB Осциллограф не подключен</span><span class="s2"></span><span class="s3">1.3.1.1</span></div>
      <footer class="task">
        <button class="start">${ic(svg`<path d="M2 3q3-2 6 0l-1 5q-3-1-6 0z" fill="#e8502a"/><path d="M9 3.500q3 1 6-.5l-1 5q-3 2-6 .5z" fill="#6fc030"/><path d="M1 9q3-2 6 0l-1 5q-3-1-6 0z" fill="#5a9cf0"/><path d="M7.500 9.500q3 1 6-.5l-1 5q-3 2-6 .5z" fill="#f8c830"/>`, 16, 16)}пуск</button>
        <div class="quick"><span class="grip"></span>${chrome}${ic(svg`<circle cx="8" cy="8" r="7" fill="#2a6fd0"/><path d="M10 1a7 7 0 1 1-8 11c6 2 10-3 8-11z" fill="#f09a20"/><circle cx="6" cy="5.500" r="3" fill="#9cd8ff"/>`, 16, 16)}</div>
        <span class="grip"></span>
        <div class="items">
          <button>${chrome}Mail.Ru: почта, п...</button>
          <button>${ic(svg`<path d="M1 1h7v13H1z" fill="#f8e8a0" stroke="#c8a850"/><path d="M6 2h8v12H7z" fill="#f0d070" stroke="#c8a850"/>`, 16, 16)}E:\\нет</button>
          <button class="cur">${I.app}Diamag 2</button>
        </div>
        <span class="grip"></span>
        <span class="lang">RU</span>
        <div class="tray">
          <svg class="chev" width="18" height="18" viewBox="0 0 18 18" fill="none"><circle cx="9" cy="9" r="8" fill="#3a90f0" stroke="#a8d4ff" /><path d="M11 5L7 9l4 4" stroke="#fff" stroke-width="2" /></svg>
          ${ic(svg`<path d="M0 14L12 2 8 14z" fill="#f00"/><path d="M12 6l5 8h-4z" fill="#0c0"/>`, 17, 16)}
          ${ic(svg`<circle cx="8" cy="8" r="7.500" fill="#ff9a10"/><circle cx="8" cy="8" r="3.500" stroke="#fff" stroke-width="2"/><path d="M12 5v7" stroke="#fff" stroke-width="2"/>`, 16, 16)}
          ${ic(svg`<circle cx="8" cy="8" r="7.500" fill="#0a0" stroke="#060"/><circle cx="8" cy="8" r="5" stroke="#032"/><circle cx="8" cy="8" r="2.500" stroke="#032"/>`, 16, 16)}
          ${ic(svg`<path d="M6 1h10v8H6z" fill="#555" stroke="#bbb"/><path d="M1 5h9v7H1zM4 12h4v2H3z" fill="#777" stroke="#ccc"/>`, 17, 16)}
          <time class="clock">21<small>35<em>Чт</em></small></time>
        </div>
      </footer>
      <svg class="cursor" width="13" height="20" viewBox="0 0 13 20"><path d="M1 1v15l3-3 3 6.500 2.500-1L7 12h4.500z" fill="#fff" stroke="#000" /></svg>
    </div>`;
  }
}
